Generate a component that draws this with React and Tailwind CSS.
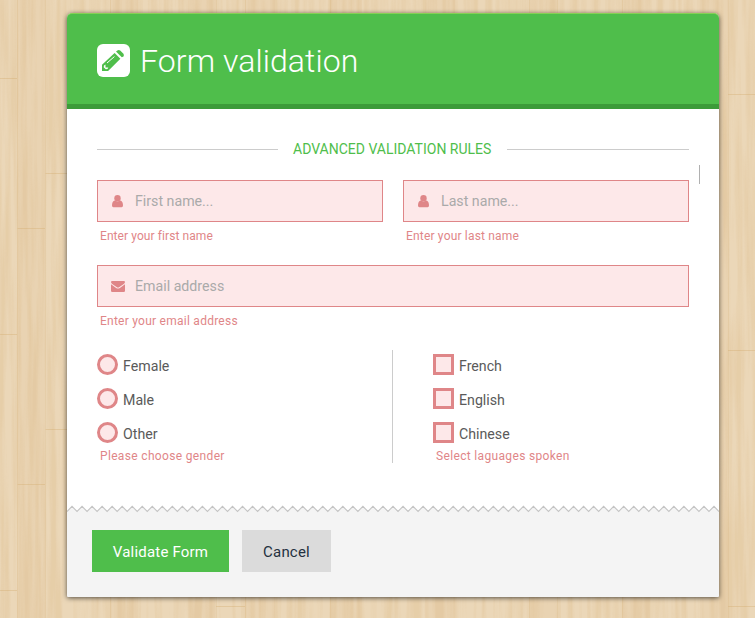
import React from "react";

const SANS = "font-['Roboto','Liberation_Sans',sans-serif]";

function WoodBackground() {
  return (
    <svg className="absolute inset-0 h-full w-full" aria-hidden="true">
      <defs>
        <filter id="grain" x="0" y="0" width="100%" height="100%" colorInterpolationFilters="sRGB">
          <feTurbulence type="fractalNoise" baseFrequency="0.14 0.006" numOctaves="3" seed="7" />
          <feColorMatrix values="0 0 0 0 0.82  0 0 0 0 0.65  0 0 0 0 0.4  3 0 0 0 -1.1" />
        </filter>
        <pattern id="planks" width="512" height="256" patternUnits="userSpaceOnUse">
          <rect width="512" height="256" fill="#ebd7b8" />
          <g fill="#e2c397" opacity="0.22">
            <rect x="17" y="0" width="28" height="256" />
            <rect x="110" y="0" width="28" height="256" />
            <rect x="188" y="0" width="28" height="256" />
            <rect x="245" y="0" width="30" height="256" />
            <rect x="330" y="0" width="32" height="256" />
            <rect x="425" y="0" width="30" height="256" />
          </g>
          <g fill="none" stroke="#d9b782" strokeOpacity="0.5">
            <path d="M17.5 228.5H45M45.5 173.5H67M0 78.5H17M216 94.5H245" />
            <path strokeOpacity="0.25" d="M45.5 0V256M17.5 0V256M216.5 0V256M245.5 0V256M110.5 0V256M330.5 0V256" />
          </g>
        </pattern>
      </defs>
      <rect width="755" height="618" fill="url(#planks)" />
      <rect width="755" height="618" filter="url(#grain)" opacity="0.18" />
    </svg>
  );
}

function PencilSquare() {
  return (
    <svg className="mt-[2px] h-[33px] w-[33px] shrink-0" viewBox="0 0 33 33">
      <rect width="33" height="33" rx="6" fill="#fff" />
      <path fill="#4fbe4b" d="M5 27V20.8L17.6 8.9L23.4 14.7L11.1 27Z" />
      <path fill="#4fbe4b" d="M19 7.5L20.4 6.4Q21.8 5.5 23.2 6.6L26.2 9.6Q27.5 11.2 26.5 12.4L24.8 13.3Z" />
      <path fill="none" stroke="#fff" strokeWidth="1" d="M10 19L17.4 12.6" />
      <path fill="#fff" d="M7 21.5L8.5 20.6V23.4H11.3L10.5 25L8.8 25.3L6.7 23.2Z" />
    </svg>
  );
}

function UserIcon() {
  return (
    <svg className="h-[13px] w-[12px] shrink-0" viewBox="0 0 12 13" fill="#df8688">
      <circle cx="5.5" cy="3.2" r="3.2" />
      <path d="M2.4 5.6L5.5 6.6L8.6 5.6Q11 6.8 11 10.6Q11 12.2 9.6 12.2H1.4Q0 12.2 0 10.6Q0 6.8 2.4 5.6Z" />
    </svg>
  );
}

function MailIcon() {
  return (
    <svg className="h-[11px] w-[14px] shrink-0" viewBox="0 0 14 11" fill="#df8688">
      <path d="M1.1 0H12.9Q14 0 14 1.1Q14 2.1 12.8 3L8.4 6.1Q7 7.1 5.6 6.1L1.2 3Q0 2 0 1.1Q0 0 1.1 0Z" />
      <path d="M0 3.3L5.1 6.9Q7 8.3 8.9 6.9L14 3.3V9.8Q14 11 12.8 11H1.2Q0 11 0 9.8Z" />
    </svg>
  );
}

function Field({ icon, placeholder, error, errorClass }) {
  return (
    <div className="min-w-0 flex-1">
      <div className="flex h-[42px] items-center border border-[#df8688] bg-[#fde8e9] pl-[13px]">
        <span className="flex w-[14px] justify-center">{icon}</span>
        <input
          placeholder={placeholder}
          className="ml-[10px] min-w-0 flex-1 bg-transparent pt-[2px] text-[14.2px] text-[#666] outline-none placeholder:text-[#aaa]"
        />
      </div>
      <ErrorText className={errorClass}>{error}</ErrorText>
    </div>
  );
}

function ErrorText({ children, className = "tracking-[0.25px]" }) {
  return <p className={`mt-[6px] pl-[3px] text-[12px] leading-[16px] text-[#df8688] ${className}`}>{children}</p>;
}

function Choices({ items, round, error }) {
  return (
    <div>
      <div className="flex flex-col gap-[13px] pt-[4px]">
        {items.map((item) => (
          <label key={item} className="flex h-[21px] items-center gap-[5px] text-[14.2px] text-[#5a5a5a]">
            <span
              className={
                round
                  ? "h-[21px] w-[21px] rounded-full border-[3px] border-[#df8688] bg-[#fde8e9]"
                  : "h-[21px] w-[21px] border-[3px] border-[#df8688] bg-[#fde8e9]"
              }
            />
            <span className="pt-[2px] leading-[18px]">{item}</span>
          </label>
        ))}
      </div>
      <div className="-mt-px">
        <ErrorText className="tracking-[0.34px]">{error}</ErrorText>
      </div>
    </div>
  );
}

const zigzag = Array.from({ length: 131 }, (_, i) => `${(i * 652) / 130},${i % 2 ? 1.3 : 6.5}`).join(" ");

export default function App() {
  return (
    <div className={`relative h-[618px] w-[755px] overflow-hidden bg-[#e9d3b1] ${SANS}`}>
      <WoodBackground />
      <main className="relative ml-[67px] flex h-[597px] w-[652px] flex-col pt-[13px]">
        <div className="flex flex-1 flex-col overflow-visible rounded-t-[5px] rounded-b-[1px] bg-[#f4f4f4] shadow-[0_1px_5px_rgba(0,0,0,0.65)]">
          <header className="flex h-[96px] items-center gap-[10px] rounded-t-[5px] border-t border-b-[5px] border-t-[#86d155] border-b-[#3c9b39] bg-[#4fbe4b] pl-[30px]">
            <PencilSquare />
            <h1 className="pt-[3px] text-[32px] font-light leading-[40px] tracking-[0.08px] text-white">Form validation</h1>
          </header>
          <section className="flex h-[398px] flex-col bg-white px-[30px] pt-[30px]">
            <div className="flex h-5 items-center gap-[15px]">
              <span className="h-px w-[181px] bg-[#ccc]" />
              <h2 className="w-[199px] whitespace-nowrap text-[14px] leading-5 text-[#4fbe4b]">ADVANCED VALIDATION RULES</h2>
              <span className="h-px flex-1 bg-[#ccc]" />
            </div>
            <div className="mt-[21px] flex gap-5">
              <Field icon={<UserIcon />} placeholder="First name..." error="Enter your first name" errorClass="tracking-[0.08px]" />
              <Field icon={<UserIcon />} placeholder="Last name..." error="Enter your last name" errorClass="tracking-[0.18px]" />
            </div>
            <div className="mt-[21px] flex">
              <Field icon={<MailIcon />} placeholder="Email address" error="Enter your email address" />
            </div>
            <div className="mt-[21px] flex h-[113px]">
              <div className="w-[296px] border-r border-[#ccc]">
                <Choices round items={["Female", "Male", "Other"]} error="Please choose gender" />
              </div>
              <div className="pl-[40px]">
                <Choices items={["French", "English", "Chinese"]} error="Select laguages spoken" />
              </div>
            </div>
          </section>
          <footer className="flex flex-1 flex-col">
            <svg className="-mt-[2px] h-[8px] w-[652px] shrink-0" viewBox="0 0 652 8">
              <path d={`M0,0H652V6L${zigzag.split(" ").reverse().join(" L")}Z`} fill="#fff" />
              <polyline points={zigzag} fill="none" stroke="#c4c4c4" strokeWidth="1.1" />
            </svg>
            <div className="mt-[17px] flex gap-[13px] pl-[25px] text-[15px] tracking-[0.2px]">
              <button className="h-[42px] w-[137px] bg-[#4fbe4b] pt-[2px] text-white">Validate Form</button>
              <button className="h-[42px] w-[89px] bg-[#dbdbdb] pt-[2px] text-[#243140]">Cancel</button>
            </div>
          </footer>
        </div>
        <span className="absolute left-[632px] top-[165px] h-[19px] w-px bg-[#b0b0b0]" />
      </main>
    </div>
  );
}
